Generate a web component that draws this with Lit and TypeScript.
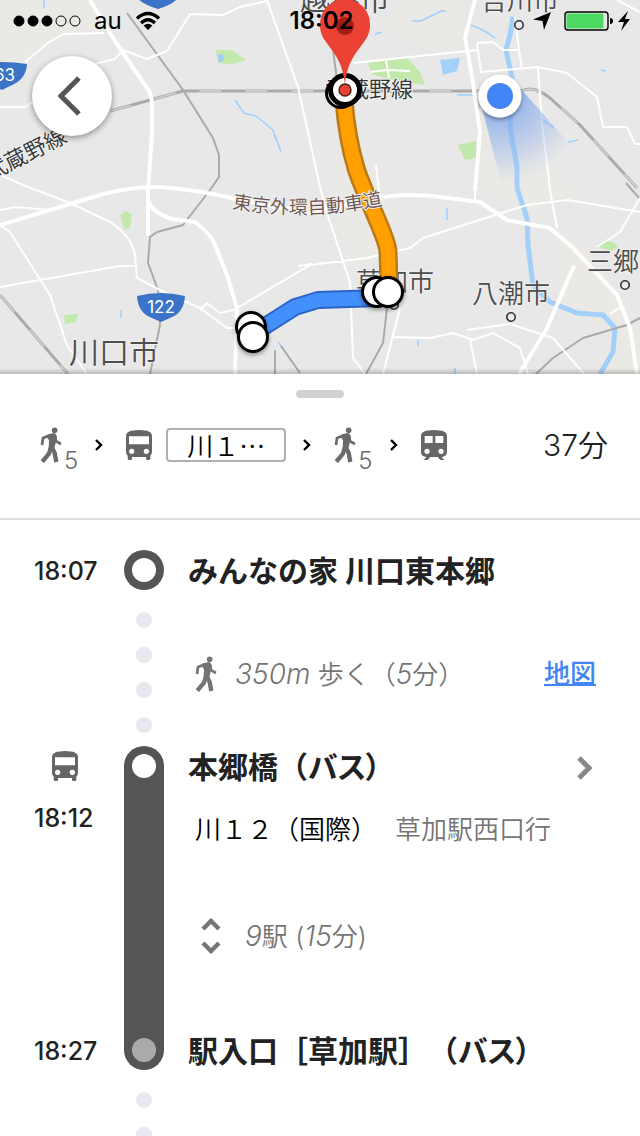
import { LitElement, html, svg, css } from "lit";
import { customElement, property } from "lit/decorators.js";

type IconName = "walk" | "bus" | "train" | "back" | "next" | "chevron" | "unfold";

const ICONS: Record<IconName, { w: number; h: number; box: string; art: unknown }> = {
  walk: {
    w: 22, h: 36, box: "0 0 66 108",
    art: svg`<circle cx="44" cy="10" r="8.5" fill="currentColor"/>
      <g fill="none" stroke="currentColor" stroke-linejoin="round">
        <path d="M32 24 L9 33 L6 54" stroke-width="8"/>
        <path d="M44 30 L49 43 L63 51" stroke-width="8"/>
        <path d="M33 60 L27 80 L7 104" stroke-width="13"/>
        <path d="M35 60 L44 78 L49 105" stroke-width="13"/>
      </g>
      <path d="M22 23 L40 18 Q50 20 51 32 L43 64 L26 66 L27 40 L20 30 Z" fill="currentColor"/>`,
  },
  bus: {
    w: 26, h: 30, box: "0 0 78 90",
    art: svg`<path fill="currentColor" fill-rule="evenodd" d="M0 18 Q0 0 39 0 Q78 0 78 18 V66 Q78 73 73 77 V86 Q73 90 69 90 H64 Q60 90 60 86 V81 H18 V86 Q18 90 14 90 H9 Q5 90 5 86 V77 Q0 73 0 66 Z M9 19 V43 H69 V19 Z M17 56 a8 8 0 1 0 .1 0 Z M61 56 a8 8 0 1 0 .1 0 Z"/>`,
  },
  train: {
    w: 26, h: 30, box: "0 0 78 90",
    art: svg`<path fill="currentColor" fill-rule="evenodd" d="M0 18 Q0 0 39 0 Q78 0 78 18 V66 Q78 80 62 81 L70 90 H58 L50 81 H28 L20 90 H8 L16 81 Q0 80 0 66 Z M11 18 V39 H35 V18 Z M43 18 V39 H67 V18 Z M18 56 a8 8 0 1 0 .1 0 Z M60 56 a8 8 0 1 0 .1 0 Z"/>`,
  },
  back: {
    w: 26, h: 40, box: "0 0 26 40",
    art: svg`<path d="M22 2 L4 20 L22 38" fill="none" stroke="currentColor" stroke-width="5"/>`,
  },
  next: {
    w: 16, h: 24, box: "0 0 16 24",
    art: svg`<path d="M2 2 L12 12 L2 22" fill="none" stroke="currentColor" stroke-width="5"/>`,
  },
  chevron: {
    w: 8, h: 14, box: "0 0 8 14",
    art: svg`<path d="M1 2 L6 7 L1 12" fill="none" stroke="currentColor" stroke-width="2.4"/>`,
  },
  unfold: {
    w: 20, h: 36, box: "0 0 20 36",
    art: svg`<path d="M2 11 L10 3 L18 11 M2 25 L10 33 L18 25" fill="none" stroke="currentColor" stroke-width="4.4"/>`,
  },
};

@customElement("route-icon")
export class RouteIcon extends LitElement {
  @property() name: IconName = "walk";

  static styles = css`
    :host { display: inline-flex; flex: none; }
    svg { display: block; }
  `;

  render() {
    const i = ICONS[this.name];
    return html`<svg width=${i.w} height=${i.h} viewBox=${i.box} aria-hidden="true">${i.art}</svg>`;
  }
}

@customElement("route-map")
export class RouteMap extends LitElement {
  static styles = css`
    :host { display: block; }
    .map { display: block; width: 100%; height: 374px; background: #e8e8e8; }
    .label {
      font-family: "Noto Sans CJK JP", sans-serif;
      font-weight: 350;
      paint-order: stroke;
      stroke: #f0f0f0;
      stroke-width: 2px;
      stroke-linejoin: round;
      fill: #4d4d4d;
    }
    .city { font-size: 26px; }
    .large { font-size: 30px; }
    .line { font-size: 22px; fill: #333333; }
    .expressway { font-size: 19px; fill: #6d534d; }
    .number { font-family: Inter, "Noto Sans CJK JP", sans-serif; font-size: 17px; fill: #ffffff; }
    .road { fill: none; stroke: #ffffff; stroke-width: 2; stroke-linejoin: round; }
    .major { stroke-width: 4; }
    .rail { fill: none; stroke: #aaaaaa; stroke-width: 2; stroke-linejoin: round; }
    .trunk { stroke-width: 3; }
    .dash { stroke: #d5d5d5; stroke-width: 1.4; stroke-dasharray: 22 24; }
    .water { fill: none; stroke: #a3d0fa; stroke-width: 1.6; stroke-linejoin: round; }
    .river { stroke-width: 5; }
    .park { fill: #c2e8ac; }
    .town { fill: #ebe9e5; }
    .stop { fill: #ffffff; stroke: #000000; stroke-width: 3; }
    .place { fill: #eeeeee; stroke: #333333; stroke-width: 1.6; }
  `;

  render() {
    return html`
      <svg class="map" viewBox="0 0 640 374" preserveAspectRatio="xMidYMid slice" role="img" aria-label="地図">
        <defs>
          <radialGradient id="beam" gradientUnits="userSpaceOnUse" cx="500" cy="96" r="88">
            <stop offset="0.2" stop-color="#7ba3ec" stop-opacity=".75"/>
            <stop offset="0.6" stop-color="#8fb0ee" stop-opacity=".45"/>
            <stop offset="1" stop-color="#a6c0f0" stop-opacity="0"/>
          </radialGradient>
          <linearGradient id="edge" x1="0" y1="0" x2="0" y2="1">
            <stop offset="0" stop-color="#000" stop-opacity="0"/>
            <stop offset="1" stop-color="#000" stop-opacity=".2"/>
          </linearGradient>
          <filter id="soft" x="-30%" y="-30%" width="160%" height="170%">
            <feDropShadow dx="0" dy="2" stdDeviation="2" flood-opacity=".4"/>
          </filter>
          <path id="arc" d="M232 208 Q308 222 387 204"/>
        </defs>

        <path class="town" d="M0 0 H88 L105 30 L60 35 L25 62 L0 85 Z M400 0 H465 L462 45 L430 48 L385 30 Z M480 95 L540 95 L560 160 L575 200 L520 210 L480 190 Z M560 228 L600 262 L640 330 V374 H590 L610 330 L560 300 Z M330 180 L350 150 L380 170 L400 260 L350 270 Z M45 105 L110 100 L100 120 L60 125 Z"/>
        <path class="park" d="M216 50 L232 50 L246 60 L232 64 L218 63 Z M368 63 L407 58 L420 72 L425 85 L392 80 L372 74 Z M458 145 L476 141 V158 L465 160 Z M120 215 L126 211 L132 214 L130 228 L124 230 Z M64 315 L78 314 L76 322 L65 324 Z M598 247 Q608 236 618 246 L612 251 Z"/>
        <path class="road" d="M370 72 L386 70 L410 71 M386 60 L389 78"/>
        <path d="M440 60 L460 58 L457 71 L443 75 Z M218 55 L223 54 L224 60 L219 63 Z" fill="#a3d0fa"/>
        <path class="water" d="M412 21 L421 21 L441 11 L446 11 M471 25 Q485 30 495 38 M375 34 L382 32 M457 95 H475 L480 108 M568 142 L578 140 M601 70 L606 71 M540 118 L554 128 M235 100 L244 113 L256 116 L273 130 L281 152 M274 135 L280 148 M44 0 V8 M447 208 V220 M418 340 V346 M455 368 V374 M121 310 V318 M278 342 L284 350"/>
        <path class="water river" d="M513 17 L510 35 L506 50 L512 77 L510 127 L517 167 L517 188 L527 218 L528 245 L533 285 L550 302 L577 313 L603 315 L615 328 L613 352 L600 374"/>

        <path class="rail" d="M127 13 L183 90 L213 138 L219 155 L219 177 L210 190 L183 225 L157 232 L150 237 L148 263 L158 290 L160 325 L150 374 M387 308 L383 343 L366 374 M640 318 L627 325 L583 338 L553 358 L536 374 M333 50 L337 80 M275 350 V374 M281 346 L300 373 M626 183 L640 199"/>
        <path class="rail trunk" d="M0 295 L68 374 M110 111 L183 91 H522 Q533 85 550 98 L580 125 L637 188"/>
        <path class="rail dash" d="M0 295 L68 374 M110 111 L183 91 H522 Q533 85 550 98 L580 125 L637 188"/>

        <path class="road" d="M0 107 H25 L33 102 M25 62 L48 43 L63 34 L104 33 M95 64 L115 59 L123 50 L147 59 L167 51 L190 14 L223 15 L240 7 L267 1 M267 0 L298 87 L320 187 L327 213 L350 282 L353 358 L365 374 M0 175 L23 185 M23 185 L70 203 L110 222 Q131 235 135 255 L137 278 L160 290 L200 308 L227 328 H236 M0 210 L15 207 L50 210 M0 225 L10 232 L50 295 L67 345 L87 374 M0 287 L40 280 L120 266 L135 266 M237 308 L310 265 L367 258 L410 248 L423 238 L470 223 L527 205 L567 200 L640 212 M200 310 L207 303 L220 313 L237 309 M298 266 L312 264"/>
        <path class="road" d="M353 63 L477 50 M477 43 L493 42 L503 50 H519 M515 17 L519 50 L522 69 M477 43 L481 72 L538 67 L567 73 L597 97 L603 127 L627 127 L635 144 H640 M538 67 L542 123 L550 190 L557 228 M617 0 L640 12 M597 247 L620 232 L640 198 M393 337 L430 338 L453 333 L473 340 L493 333 L520 348 L528 374 M467 330 L510 324 L553 338 L584 374 M400 308 L383 374 M470 340 L477 374 M475 185 V200 M610 314 L622 306 M380 200 L376 165"/>
        <path class="road major" d="M90 0 L110 33 L123 53 L147 88 Q152 94 152 105 L152 133 L148 190 V200 Q151 212 172 219 L195 222 Q213 235 217 250 L227 275 L237 308 L235 374 M148 195 V236 M0 225 L50 210 L100 195 Q133 186 160 187 Q200 190 240 200 L310 213 L383 197 Q410 193 440 197 L480 202 L507 220 L550 228 L573 248 L617 295 L630 328 L637 374 M475 0 L465 37 L473 83 L480 133 L475 190 M574 266 L547 328 L519 374"/>

        <text class="label large" x="300" y="10">越谷市</text>
        <text class="label city" x="481" y="10">吉川市</text>
        <text class="label line" x="325" y="97">武蔵野線</text>
        <text class="label line" transform="translate(-10 181) rotate(-27)">武蔵野線</text>
        <text class="label large" x="69" y="363">川口市</text>
        <text class="label city" x="356" y="291">草加市</text>
        <text class="label city" x="472" y="303">八潮市</text>
        <text class="label city" x="587" y="271">三郷</text>
        <circle class="place" cx="519" cy="25" r="4.2"/>
        <circle class="place" cx="511" cy="317" r="4.2"/>
        <circle class="place" cx="625" cy="285" r="4.2"/>
        <circle class="place" cx="394" cy="305" r="4.2"/>

        <path d="M137 296 Q161 290 185 296 Q184 313 170 318 L161 322 L152 318 Q138 313 137 296 Z" fill="#3b74c7"/>
        <text class="number" x="161" y="313" text-anchor="middle">122</text>
        <path d="M-22 64 Q2 60 27 64 Q26 80 10 86 L2 90 L-6 86 Z" fill="#3b74c7"/>
        <text class="number" x="-6" y="81">63</text>
        <path d="M137 -2 H178 Q172 5 158 9 Q144 5 137 -2 Z" fill="#3b74c7"/>

        <g fill="none" stroke-linejoin="round">
          <path d="M262 328 L295 307 L318 300 L380 298" stroke="#2c62c9" stroke-width="18"/>
          <path d="M262 328 L295 307 L318 300 L380 298" stroke="#4190fb" stroke-width="14"/>
          <path d="M344 100 Q347 138 356 168 C363 192 388 238 388 252 L389 284" stroke="#b97a16" stroke-width="19"/>
          <path d="M344 100 Q347 138 356 168 C363 192 388 238 388 252 L389 284" stroke="#ff9f00" stroke-width="14"/>
        </g>
        <text class="label expressway"><textPath href="#arc">東京外環自動車道</textPath></text>

        <g filter="url(#soft)">
          <circle class="stop" cx="251" cy="327" r="14.5"/>
          <circle class="stop" cx="253" cy="337" r="14.5"/>
          <circle class="stop" cx="377" cy="292" r="14.5"/>
          <circle class="stop" cx="388" cy="292" r="14.5"/>
        </g>
        <circle class="stop" cx="341" cy="93" r="14.5"/>
        <circle cx="345" cy="90" r="14.5" fill="#fff" stroke="#000" stroke-width="5"/>
        <path d="M345 84 C342 62 337 57 326 42 C320 34 320 28 320 24 A25 25 0 0 1 370 24 C370 28 370 34 364 42 C353 57 348 62 345 84 Z" fill="#ea4335"/>
        <circle cx="345" cy="26" r="9" fill="#a51b16"/>
        <circle cx="345" cy="90" r="6" fill="#ea4335" stroke="#4a1a18" stroke-width="1.4"/>

        <path d="M482 108 L502 186 L584 160 L520 88 Z" fill="url(#beam)"/>
        <g filter="url(#soft)"><circle cx="500" cy="96" r="21.5" fill="#fff"/></g>
        <circle cx="500" cy="96" r="13" fill="#4285f4"/>
        <rect y="368" width="640" height="6" fill="url(#edge)"/>
      </svg>
    `;
  }
}

@customElement("status-bar")
export class StatusBar extends LitElement {
  static styles = css`
    :host {
      display: grid;
      grid-template-columns: 1fr auto 1fr;
      align-items: center;
      height: 40px;
      padding: 0 10px 0 13px;
      color: #000000;
      font: 400 24px/42px Inter, "Noto Sans CJK JP", sans-serif;
    }
    .group { display: flex; align-items: center; gap: 13px; }
    .end { justify-content: flex-end; }
    .clock { font-weight: 600; }
    svg { display: block; flex: none; }
  `;

  render() {
    return html`
      <div class="group">
        <svg width="68" height="12" viewBox="0 0 68 12" aria-hidden="true">
          ${[0, 1, 2, 3, 4].map(
            (n) => svg`<circle cx=${6 + n * 14} cy="6" r="5" fill=${n < 3 ? "#000" : "none"} stroke="#000"/>`
          )}
        </svg>
        <span>au</span>
        <svg width="26" height="20" viewBox="0 0 26 20" aria-hidden="true">
          <g fill="none" stroke="#000" stroke-width="3.4">
            <path d="M2 7.5 Q13 -2.5 24 7.5"/>
            <path d="M6 12 Q13 5.5 20 12"/>
          </g>
          <path d="M8.6 14.4 Q13 11 17.4 14.4 L13 19 Z"/>
        </svg>
      </div>
      <span class="clock">18:02</span>
      <div class="group end">
        <svg width="18" height="18" viewBox="0 0 18 18" aria-hidden="true"><path d="M18 0 L11 18 L9.6 9 L0 7.6 Z"/></svg>
        <svg width="66" height="20" viewBox="0 0 66 20" aria-hidden="true">
          <rect x="1" y="1" width="43" height="18" rx="3" fill="#e8e8e8" stroke="#000" stroke-width="1.4"/>
          <rect x="2.5" y="2.5" width="37" height="15" rx="1.5" fill="#4cd964"/>
          <path d="M46 7 Q49 7 49 10 Q49 13 46 13 Z"/>
          <path d="M64 0 L54 11 H60 L57 20 L66 8 H61 Z"/>
        </svg>
      </div>
    `;
  }
}

@customElement("app-root")
export class AppRoot extends LitElement {
  static styles = css`
    :host {
      display: flex;
      flex-direction: column;
      height: 100vh;
      overflow: hidden;
      background: #ffffff;
      color: #222222;
      font-family: Inter, "Noto Sans CJK JP", sans-serif;
      text-spacing-trim: space-all;
    }
    .top { position: relative; flex: none; }
    .status { position: absolute; top: 0; left: 0; right: 0; }
    .back {
      position: absolute;
      top: 56px;
      left: 32px;
      display: grid;
      place-items: center;
      width: 80px;
      height: 80px;
      padding: 0 4px 0 0;
      border: 0;
      border-radius: 50%;
      background: #ffffff;
      color: #555555;
      box-shadow: 0 2px 6px rgba(0, 0, 0, 0.4);
    }
    .sheet { flex: none; border-bottom: 2px solid #dddddd; }
    .handle { width: 48px; height: 8px; margin: 16px auto 0; border-radius: 4px; background: #d2d2d2; }
    .summary {
      display: flex;
      align-items: center;
      height: 94px;
      padding: 0 32px 26px 40px;
      color: #666666;
    }
    .walk { display: flex; align-items: flex-end; gap: 2px; color: #6a6a6a; font-size: 24px; line-height: 20px; }
    .minutes { margin-bottom: -8px; font-weight: 300; }
    .arrow { margin: 0 23px 0 17px; color: #000000; }
    .line {
      box-sizing: border-box;
      width: 120px;
      height: 34px;
      margin-left: 14px;
      border: 2px solid #b0b0b0;
      border-radius: 4px;
      color: #000000;
      font-family: "Noto Sans CJK JP", sans-serif;
      font-size: 26px;
      font-weight: 350;
      line-height: 30px;
      text-align: center;
      white-space: nowrap;
    }
    .total { margin-left: auto; color: #222222; font-size: 30px; font-weight: 350; line-height: 42px; }
    .steps {
      flex: 1;
      min-height: 0;
      margin: 0;
      padding: 30px 0 0;
      overflow-y: auto;
      scrollbar-width: none;
      list-style: none;
    }
    .step { display: grid; grid-template-columns: 124px 40px 1fr; }
    .times { display: flex; flex-direction: column; padding-left: 34px; }
    .time { padding-top: 2px; font-size: 25px; font-weight: 450; line-height: 38px; }
    .vehicle { display: flex; align-items: center; height: 40px; margin-bottom: 11px; padding-left: 18px; color: #666666; }
    .last { margin-top: auto; }
    .rail {
      box-sizing: border-box;
      display: flex;
      flex-direction: column;
      justify-content: space-between;
      padding: 8px;
      border-radius: 20px;
      background: #555555;
    }
    .knob { width: 24px; height: 24px; border-radius: 50%; background: #ffffff; }
    .dim { background: #aaaaaa; }
    .dots { display: flex; flex-direction: column; align-items: center; gap: 19px; height: 134px; padding-top: 22px; }
    .dot { width: 16px; height: 16px; border-radius: 50%; background: #e8e8ee; }
    .body { display: flex; flex-direction: column; padding: 0 44px 0 24px; }
    .name { margin: 0; padding-top: 2px; font-size: 30px; font-weight: 700; line-height: 38px; white-space: nowrap; }
    .kana { font-feature-settings: "palt"; }
    .head { display: flex; align-items: center; justify-content: space-between; }
    .more { display: grid; padding: 4px 3px 0 0; border: 0; background: none; color: #888888; }
    .detail { display: flex; align-items: center; font-size: 26px; font-weight: 350; line-height: 40px; white-space: nowrap; }
    .detail i { font-size: 28px; font-weight: 300; }
    .muted { color: #757575; }
    .walking { gap: 18px; padding-left: 7px; height: 168px; margin-bottom: -12px; }
    .service { gap: 18px; margin-top: 24px; padding-left: 7px; color: #000000; }
    .stops {
      gap: 24px;
      height: 40px;
      margin: 66px 0 74px;
      padding: 0 0 0 13px;
      border: 0;
      background: none;
      font-family: inherit;
    }
    .link { margin-left: auto; color: #4285f4; font-weight: 500; text-decoration-thickness: 2px; }
  `;

  private place(time: string, name: string) {
    return html`
      <li class="step">
        <div class="times"><time class="time">${time}</time></div>
        <div class="rail"><span class="knob"></span></div>
        <div class="body"><h2 class="name">${name}</h2></div>
      </li>
    `;
  }

  private walk() {
    return html`
      <li class="step">
        <div class="times"></div>
        <div class="dots">${[0, 1, 2, 3].map(() => html`<span class="dot"></span>`)}</div>
        <div class="body">
          <div class="detail muted walking">
            <route-icon name="walk"></route-icon>
            <span><i>350m</i> 歩く（<i>5</i>分）</span>
            <a class="link" href="#map">地図</a>
          </div>
        </div>
      </li>
    `;
  }

  private ride() {
    return html`
      <li class="step">
        <div class="times">
          <span class="vehicle"><route-icon name="bus"></route-icon></span>
          <time class="time">18:12</time>
          <time class="time last">18:27</time>
        </div>
        <div class="rail"><span class="knob"></span><span class="knob dim"></span></div>
        <div class="body">
          <div class="head">
            <h2 class="name">本郷橋（<span class="kana">バス）</span></h2>
            <button class="more" aria-label="詳細"><route-icon name="next"></route-icon></button>
          </div>
          <div class="detail service"><span>川１２（国際）</span><span class="muted">草加駅西口行</span></div>
          <button class="detail muted stops">
            <route-icon name="unfold"></route-icon>
            <span><i>9</i>駅 (<i>15</i>分)</span>
          </button>
          <h2 class="name">駅入口［草加駅］（<span class="kana">バス）</span></h2>
        </div>
      </li>
    `;
  }

  render() {
    const arrow = html`<route-icon class="arrow" name="chevron"></route-icon>`;
    const walk = html`<span class="walk"><route-icon name="walk"></route-icon><span class="minutes">5</span></span>`;
    return html`
      <header class="top" id="map">
        <route-map></route-map>
        <status-bar class="status"></status-bar>
        <button class="back" aria-label="戻る"><route-icon name="back"></route-icon></button>
      </header>
      <section class="sheet">
        <div class="handle"></div>
        <div class="summary">
          ${walk}${arrow}
          <route-icon name="bus"></route-icon><span class="line">川１…</span>
          ${arrow}${walk}${arrow}
          <route-icon name="train"></route-icon>
          <span class="total">37分</span>
        </div>
      </section>
      <ol class="steps">
        ${this.place("18:07", "みんなの家 川口東本郷")} ${this.walk()} ${this.ride()} ${this.walk()}
      </ol>
    `;
  }
}
